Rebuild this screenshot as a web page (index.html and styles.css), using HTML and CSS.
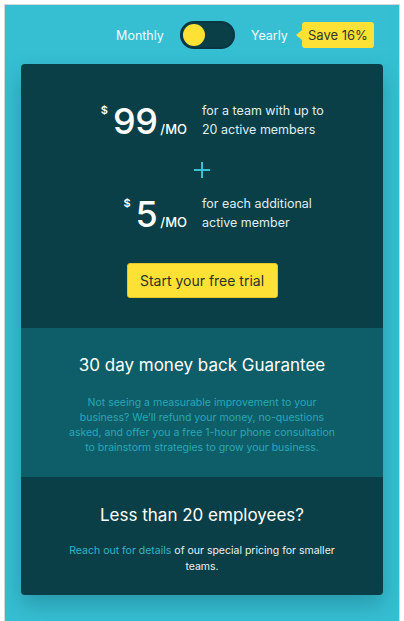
FILE: index.html
```html
<!DOCTYPE html>
<html>
<head>
    <link rel="stylesheet" href="styles.css">
</head>
<body>
    <div class="frame">
        <div class="billing-switch">
            <span class="period">Monthly</span>
            <button class="toggle" aria-label="Switch billing period"><span class="knob"></span></button>
            <span class="period yearly">
                Yearly
                <span class="save-badge">Save 16%</span>
            </span>
        </div>

        <div class="card">
            <div class="pricing">
                <div class="price-row">
                    <div class="price"><sup>$</sup><span class="amount">99</span><span class="per">/MO</span></div>
                    <p class="price-desc">for a team with up to<br>20 active members</p>
                </div>

                <div class="plus">
                    <svg width="16" height="16" viewBox="0 0 16 16"><path d="M8 0v16M0 8h16" stroke="#35c0d3" stroke-width="2"/></svg>
                </div>

                <div class="price-row">
                    <div class="price"><sup>$</sup><span class="amount">5</span><span class="per">/MO</span></div>
                    <p class="price-desc">for each additional<br>active member</p>
                </div>

                <button class="trial-btn">Start your free trial</button>
            </div>

            <div class="guarantee">
                <h2>30 day money back Guarantee</h2>
                <p>Not seeing a measurable improvement to your business? We’ll refund your money, no-questions asked, and offer you a free 1-hour phone consultation to brainstorm strategies to grow your business.</p>
            </div>

            <div class="small-teams">
                <h2>Less than 20 employees?</h2>
                <p><a href="#">Reach out for details</a> of our special pricing for smaller teams.</p>
            </div>
        </div>
    </div>
</body>
</html>
```

FILE: styles.css
```css
body {
    margin: 4px;
    background-color: #fff;
    font-family: Inter, "Noto Sans", sans-serif;
}

.frame {
    height: 610px;
    border: 1px solid #d4d8da;
    background-color: #36bfd3;
    padding: 16px 16px 0;
}

.billing-switch {
    display: flex;
    justify-content: center;
    align-items: center;
    gap: 16px;
    height: 28px;
    margin-bottom: 15px;
    color: #eefafc;
    font-size: 12.5px;
}

.period.yearly {
    position: relative;
}

.toggle {
    width: 55px;
    height: 28px;
    padding: 0;
    border: 2px solid #083641;
    border-radius: 14px;
    background-color: #0b3f48;
    display: flex;
    align-items: center;
    cursor: pointer;
}

.knob {
    width: 22px;
    height: 22px;
    margin-left: 1px;
    border-radius: 50%;
    background-color: #fde235;
}

.save-badge {
    position: absolute;
    left: calc(100% + 14px);
    top: 50%;
    transform: translateY(-50%);
    white-space: nowrap;
    width: 72px;
    height: 26px;
    line-height: 26px;
    text-align: center;
    border-radius: 3px;
    background-color: #fde235;
    color: #33372f;
    font-size: 13px;
}

.save-badge::before {
    content: "";
    position: absolute;
    left: -6px;
    top: 8px;
    border-top: 5px solid transparent;
    border-bottom: 5px solid transparent;
    border-right: 6px solid #fde235;
}

.card {
    background-color: #0b3f48;
    border-radius: 4px;
    overflow: hidden;
    box-shadow: 0 10px 22px rgba(0, 40, 50, 0.25);
    text-align: center;
    color: #fff;
}

.pricing {
    padding: 37px 0 30px;
}

.price-row {
    display: grid;
    grid-template-columns: 1fr 1fr;
    height: 40px;
}

.price {
    display: flex;
    justify-content: flex-end;
    align-items: baseline;
    padding-right: 15px;
    line-height: 40px;
}

.price sup {
    font-size: 11px;
    font-weight: 600;
    align-self: flex-start;
    line-height: 18px;
    margin-right: 5px;
}

.amount {
    font-size: 36px;
    font-weight: 500;
    letter-spacing: -0.5px;
}

.per {
    font-size: 13px;
    font-weight: 500;
    margin-left: 3px;
}

.price-desc {
    margin: 0;
    text-align: left;
    font-size: 12.5px;
    line-height: 19px;
    color: #dfeef0;
}

.plus {
    height: 53px;
    padding-top: 4px;
    box-sizing: border-box;
    display: flex;
    justify-content: center;
    align-items: center;
}

.trial-btn {
    margin-top: 29px;
    width: 151px;
    height: 35px;
    border: 1px solid #e0c62a;
    border-radius: 3px;
    background-color: #fde235;
    color: #2d3128;
    font-family: inherit;
    font-size: 14px;
    cursor: pointer;
}

.guarantee {
    background-color: #0d5e68;
    padding: 25px 0 22px;
}

h2 {
    margin: 0;
    font-size: 17px;
    font-weight: 400;
    line-height: 24px;
}

.guarantee p {
    margin: 18px auto 0;
    max-width: 268px;
    font-size: 10.5px;
    line-height: 15px;
    color: #2aa7b7;
}

.small-teams {
    padding: 26px 0 20px;
}

.small-teams p {
    margin: 16px auto 0;
    max-width: 268px;
    font-size: 10.5px;
    line-height: 16px;
    color: #e6f0f1;
}

.small-teams a {
    color: #31b5c6;
    text-decoration: none;
}
```
